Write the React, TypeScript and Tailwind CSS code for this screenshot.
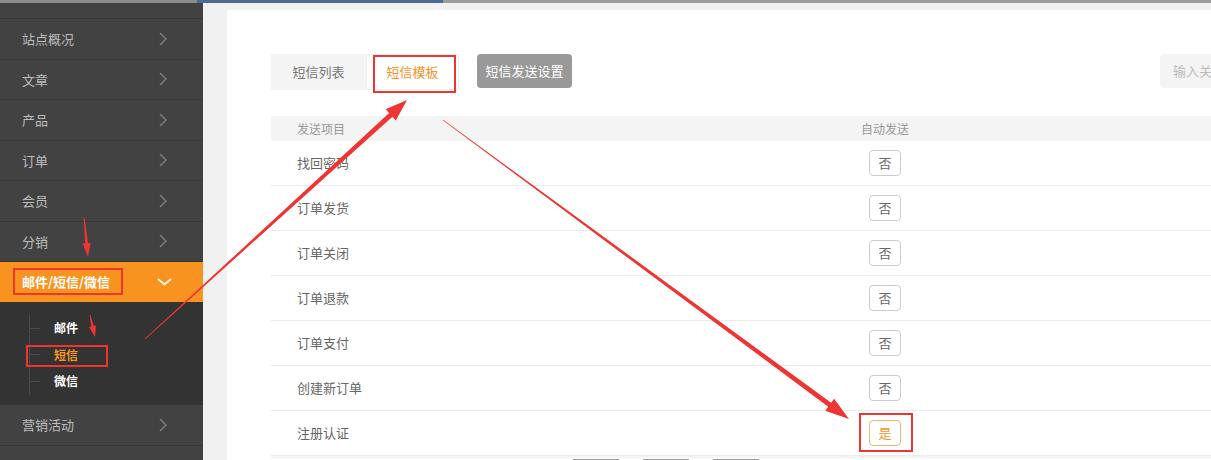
import React from 'react';

const menu = ['站点概况', '文章', '产品', '订单', '会员', '分销'];
const rows: { name: string; on: boolean }[] = [
  { name: '找回密码', on: false },
  { name: '订单发货', on: false },
  { name: '订单关闭', on: false },
  { name: '订单退款', on: false },
  { name: '订单支付', on: false },
  { name: '创建新订单', on: false },
  { name: '注册认证', on: true },
];

const RED = '#ee3533';

// tapered arrow like the screenshot tool draws: thin tail, thick near the head
function arrowPoints(tx: number, ty: number, hx: number, hy: number, headLen: number, headW: number, shaftW: number) {
  const dx = hx - tx;
  const dy = hy - ty;
  const len = Math.hypot(dx, dy);
  const ux = dx / len;
  const uy = dy / len;
  const nx = -uy;
  const ny = ux;
  const bx = hx - ux * headLen;
  const by = hy - uy * headLen;
  const p = (x: number, y: number) => `${x.toFixed(1)},${y.toFixed(1)}`;
  return [
    p(tx + nx * 0.4, ty + ny * 0.4),
    p(bx + nx * shaftW / 2, by + ny * shaftW / 2),
    p(bx + nx * headW / 2, by + ny * headW / 2),
    p(hx, hy),
    p(bx - nx * headW / 2, by - ny * headW / 2),
    p(bx - nx * shaftW / 2, by - ny * shaftW / 2),
    p(tx - nx * 0.4, ty - ny * 0.4),
  ].join(' ');
}

const ChevronRight = () => (
  <svg width="8" height="14" viewBox="0 0 8 14" className="shrink-0">
    <polyline points="1,1 7,7 1,13" fill="none" stroke="#7c7c7c" strokeWidth="1.5" />
  </svg>
);

const Annotations = () => (
  <svg className="absolute inset-0 pointer-events-none" width="1211" height="460" viewBox="0 0 1211 460">
    <rect x="14" y="269" width="108" height="25" fill="none" stroke={RED} strokeWidth="2" />
    <rect x="27" y="346" width="80" height="20" fill="none" stroke={RED} strokeWidth="2" />
    <rect x="374" y="56" width="81" height="36" fill="none" stroke={RED} strokeWidth="2" />
    <rect x="860" y="414" width="52" height="37" fill="none" stroke={RED} strokeWidth="2" />
    <polygon points={arrowPoints(145, 339, 407, 100, 22, 15, 5)} fill={RED} />
    <polygon points={arrowPoints(443, 120, 849, 419, 24, 15, 5)} fill={RED} />
    <polygon points={arrowPoints(84, 217, 88, 257, 14, 8, 3)} fill={RED} />
    <polygon points={arrowPoints(90, 315, 95, 337, 11, 7, 2.5)} fill={RED} />
  </svg>
);

export default function App() {
  return (
    <div
      className="relative w-[1211px] h-[460px] overflow-hidden flex flex-col bg-[#f1f1f1]"
      style={{ fontFamily: '"Noto Sans CJK SC", "Noto Sans", sans-serif' }}
    >
      {/* top strip */}
      <div className="flex h-[3px] shrink-0">
        <div className="w-[197px] bg-[#8c8c8c]" />
        <div className="w-[246px] bg-[#4d6b92]" />
        <div className="flex-1 bg-[#9c9c9c]" />
      </div>

      <div className="flex flex-1 min-h-0">
        {/* sidebar */}
        <aside className="w-[203px] shrink-0 bg-[#424242] flex flex-col">
          <div className="h-[16px] border-b border-[#373737]" />
          {menu.map((m) => (
            <div
              key={m}
              className="h-[40.5px] border-b border-[#373737] flex items-center justify-between pl-[22px] pr-[36px] text-[13px] text-[#bdbdbd]"
            >
              <span>{m}</span>
              <ChevronRight />
            </div>
          ))}
          <div className="h-[40px] bg-[#f7931e] flex items-center justify-between pl-[22px] pr-[31px] text-[13px] font-bold text-white">
            <span>邮件/短信/微信</span>
            <svg width="15" height="8" viewBox="0 0 15 8">
              <polyline points="1,1 7.5,6.5 14,1" fill="none" stroke="#fff3e6" strokeWidth="2" />
            </svg>
          </div>
          <div className="h-[103px] bg-[#333333] pt-[13px]">
            <div className="ml-[29px] border-l border-[#4a4a4a] flex flex-col w-[120px]">
              {['邮件', '短信', '微信'].map((s) => (
                <div key={s} className="h-[26.5px] flex items-center">
                  <div className="w-[10px] h-px bg-[#4a4a4a]" />
                  <span
                    className={`ml-[14px] text-[12px] font-bold ${s === '短信' ? 'text-[#f7931e]' : 'text-white'}`}
                  >
                    {s}
                  </span>
                </div>
              ))}
            </div>
          </div>
          <div className="h-[41px] border-b border-[#373737] flex items-center justify-between pl-[22px] pr-[36px] text-[13px] text-[#bdbdbd]">
            <span>营销活动</span>
            <ChevronRight />
          </div>
          <div className="flex-1" />
        </aside>

        {/* main */}
        <main className="flex-1 min-w-0 pl-[24px] pt-[7px] overflow-hidden">
          <div className="bg-white h-full pl-[44px] pt-[44px] overflow-hidden">
            <div className="w-[1089px] flex items-start">
              <div className="flex h-[36px]">
                <div className="w-[95px] bg-[#f4f4f4] flex items-center justify-center text-[13px] text-[#777]">
                  短信列表
                </div>
                <div className="w-[93px] bg-white border border-[#f0f0f0] flex items-center justify-center text-[13px] text-[#f7931e]">
                  短信模板
                </div>
              </div>
              <div className="ml-[18px] w-[95px] h-[34px] bg-[#999999] rounded-[4px] flex items-center justify-center text-[13px] text-white">
                短信发送设置
              </div>
              <div className="flex-1" />
              <div className="w-[200px] h-[34px] bg-[#f4f4f4] rounded-[4px] flex items-center pl-[13px] text-[13px] text-[#bbbbbb]">
                输入关键词
              </div>
            </div>

            <div className="w-[1089px] mt-[26px]">
              <div className="h-[25px] bg-[#f4f4f4] rounded-[3px] grid grid-cols-[564px_100px_1fr] items-center text-[12px] text-[#999]">
                <span className="pl-[26px]">发送项目</span>
                <span className="text-center">自动发送</span>
                <span />
              </div>
              {rows.map((r) => (
                <div
                  key={r.name}
                  className="h-[45px] border-b border-[#ebebeb] grid grid-cols-[564px_100px_1fr] items-center text-[13px] text-[#666]"
                >
                  <span className="pl-[26px]">{r.name}</span>
                  <div className="flex justify-center">
                    <div
                      className={`w-[32px] h-[26px] rounded-[4px] border flex items-center justify-center text-[13px] bg-white ${
                        r.on ? 'border-[#f8b36a] text-[#f7931e]' : 'border-[#cccccc] text-[#666]'
                      }`}
                    >
                      {r.on ? '是' : '否'}
                    </div>
                  </div>
                  <span />
                </div>
              ))}
              <div className="h-[2px] bg-[#f4f4f4]" />
              <div className="flex gap-[24px] pl-[302px] pt-px">
                <div className="w-[46px] h-[20px] border-t-2 border-[#9a9a9a] bg-white" />
                <div className="w-[46px] h-[20px] border-t-2 border-[#9a9a9a] bg-white" />
                <div className="w-[46px] h-[20px] border-t-2 border-[#9a9a9a] bg-white" />
              </div>
            </div>
          </div>
        </main>
      </div>

      <Annotations />
    </div>
  );
}
